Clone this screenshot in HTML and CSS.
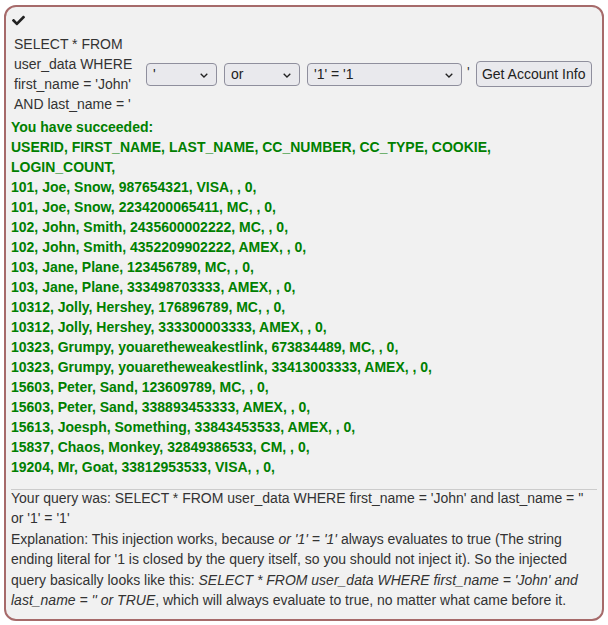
FILE: index.html
```html
<!DOCTYPE html>
<html>
<head>
<meta charset="utf-8">
<link rel="stylesheet" href="styles.css">
</head>
<body>
<div class="attack-container">
  <div class="assignment-success">
    <svg class="check" viewBox="0 0 512 512" width="13" height="13"><path d="M173.9 439.4L7.5 273c-10-10-10-26.2 0-36.2l36.2-36.2c10-10 26.2-10 36.2 0L192 312.7 432.1 72.6c10-10 26.2-10 36.2 0l36.2 36.2c10 10 10 26.2 0 36.2L210.1 439.4c-10 10-26.2 10-36.2 0z" fill="#222"/></svg>
  </div>
  <form class="attack-form">
    <table class="query-table">
      <tr>
        <td class="query-text">SELECT * FROM user_data WHERE first_name = 'John' AND last_name = '</td>
        <td class="controls">
          <div class="control-row">
            <span class="sel-wrap sel-a"><select class="sel"><option>'</option></select><svg class="chev" viewBox="0 0 8 5" width="8" height="5"><path d="M0.7 0.7L4 4 7.3 0.7" fill="none" stroke="#222" stroke-width="1.3"/></svg></span>
            <span class="sel-wrap sel-b"><select class="sel"><option>or</option></select><svg class="chev" viewBox="0 0 8 5" width="8" height="5"><path d="M0.7 0.7L4 4 7.3 0.7" fill="none" stroke="#222" stroke-width="1.3"/></svg></span>
            <span class="sel-wrap sel-c"><select class="sel"><option>'1' = '1</option></select><svg class="chev" viewBox="0 0 8 5" width="8" height="5"><path d="M0.7 0.7L4 4 7.3 0.7" fill="none" stroke="#222" stroke-width="1.3"/></svg></span>
            <span class="quote">'</span>
            <button type="button" class="btn">Get Account Info</button>
          </div>
        </td>
      </tr>
    </table>
  </form>
  <div class="attack-feedback">You have succeeded:<br>USERID, FIRST_NAME, LAST_NAME, CC_NUMBER, CC_TYPE, COOKIE, LOGIN_COUNT, <br>101, Joe, Snow, 987654321, VISA, , 0, <br>101, Joe, Snow, 2234200065411, MC, , 0, <br>102, John, Smith, 2435600002222, MC, , 0, <br>102, John, Smith, 4352209902222, AMEX, , 0, <br>103, Jane, Plane, 123456789, MC, , 0, <br>103, Jane, Plane, 333498703333, AMEX, , 0, <br>10312, Jolly, Hershey, 176896789, MC, , 0, <br>10312, Jolly, Hershey, 333300003333, AMEX, , 0, <br>10323, Grumpy, youaretheweakestlink, 673834489, MC, , 0, <br>10323, Grumpy, youaretheweakestlink, 33413003333, AMEX, , 0, <br>15603, Peter, Sand, 123609789, MC, , 0, <br>15603, Peter, Sand, 338893453333, AMEX, , 0, <br>15613, Joesph, Something, 33843453533, AMEX, , 0, <br>15837, Chaos, Monkey, 32849386533, CM, , 0, <br>19204, Mr, Goat, 33812953533, VISA, , 0, <br></div>
  <hr class="divider">
  <div class="attack-output">Your query was: SELECT * FROM user_data WHERE first_name = 'John' and last_name = '' or '1' = '1'<br>Explanation: This injection works, because <i>or '1' = '1'</i> always evaluates to true (The string ending literal for '1 is closed by the query itself, so you should not inject it). So the injected query basically looks like this: <i>SELECT * FROM user_data WHERE first_name = 'John' and last_name = '' or TRUE</i>, which will always evaluate to true, no matter what came before it.</div>
</div>
</body>
</html>
```
FILE: styles.css
```css
html, body {
  margin: 0;
  padding: 0;
  background: #fff;
}
body {
  font-family: "Liberation Sans", Arial, sans-serif;
  font-size: 14px;
  line-height: 20px;
  color: #333;
  padding: 5px 4px 4px 4px;
}
.attack-container {
  border: 2px solid #a66a6a;
  border-radius: 12px;
  background: #f1f1f1;
  padding: 3px 5px 9px 5px;
}
.assignment-success {
  height: 21px;
  padding-left: 1px;
  display: flex;
  align-items: center;
}
.check {
  display: block;
}
.attack-form {
  margin: 0;
}
.query-table {
  border-spacing: 2px;
}
.query-table td {
  padding: 1px;
  vertical-align: middle;
  text-align: left;
}
.query-text {
  width: 128px;
}
.control-row {
  display: flex;
  align-items: center;
  white-space: nowrap;
}
.sel-wrap {
  position: relative;
  display: block;
  margin-right: 7px;
}
.sel-a { width: 71px; }
.sel-b { width: 76px; }
.sel-c { width: 155px; margin-right: 5px; }
.sel {
  display: block;
  width: 100%;
  -webkit-appearance: none;
  appearance: none;
  font-family: "Liberation Sans", Arial, sans-serif;
  font-size: 14px;
  height: 23px;
  padding: 0 20px 0 6px;
  background: #e9e9ed;
  border: 1px solid #8f8f9d;
  border-radius: 4px;
  color: #222;
  margin: 0;
}
.chev {
  position: absolute;
  right: 9px;
  top: 10px;
  pointer-events: none;
}
.quote {
  margin-right: 6px;
  color: #333;
  position: relative;
  top: -2px;
}
.btn {
  font-family: "Liberation Sans", Arial, sans-serif;
  font-size: 14px;
  height: 26px;
  width: 116px;
  background: #e9e9ed;
  border: 1px solid #8f8f9d;
  border-radius: 4px;
  color: #222;
  padding: 0 4px;
  margin: 0;
}
.attack-feedback {
  color: #008000;
  font-weight: bold;
}
.divider {
  border: 0;
  border-top: 1px solid #ccc;
  margin: 12px 0 -2px 0;
  height: 0;
}
.attack-output {
  line-height: 20.4px;
}
```
